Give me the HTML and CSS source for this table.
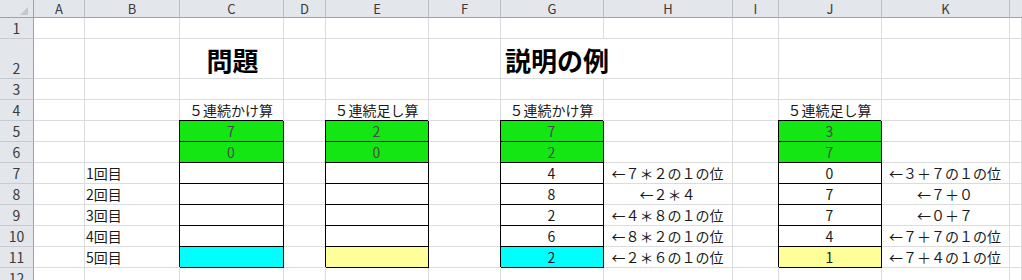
FILE: index.html
```html
<!DOCTYPE html>
<html lang="ja">
<head>
<meta charset="utf-8">
<title>Sheet</title>
<link rel="stylesheet" href="styles.css">
</head>
<body>
<div class="sheet">
  <!-- header row -->
  <div class="h corner"><span class="tri"></span></div>
  <div class="h">A</div><div class="h">B</div><div class="h">C</div><div class="h">D</div>
  <div class="h">E</div><div class="h">F</div><div class="h">G</div><div class="h">H</div>
  <div class="h">I</div><div class="h">J</div><div class="h">K</div><div class="h last"></div>

  <!-- row 1 -->
  <div class="rh">1</div>
  <div class="c"></div><div class="c"></div><div class="c"></div><div class="c"></div><div class="c"></div><div class="c"></div><div class="c"></div><div class="c"></div><div class="c"></div><div class="c"></div><div class="c"></div><div class="c"></div>

  <!-- row 2 -->
  <div class="rh">2</div>
  <div class="c"></div><div class="c"></div>
  <div class="c ctr title">問題</div>
  <div class="c"></div><div class="c"></div><div class="c"></div>
  <div class="c title nor">説明の例</div>
  <div class="c"></div><div class="c"></div><div class="c"></div><div class="c"></div><div class="c"></div>

  <!-- row 3 -->
  <div class="rh">3</div>
  <div class="c"></div><div class="c"></div><div class="c"></div><div class="c"></div><div class="c"></div><div class="c"></div><div class="c"></div><div class="c"></div><div class="c"></div><div class="c"></div><div class="c"></div><div class="c"></div>

  <!-- row 4 -->
  <div class="rh">4</div>
  <div class="c"></div><div class="c"></div>
  <div class="c ctr">５連続かけ算</div>
  <div class="c"></div>
  <div class="c ctr">５連続足し算</div>
  <div class="c"></div>
  <div class="c ctr">５連続かけ算</div>
  <div class="c"></div><div class="c"></div>
  <div class="c ctr">５連続足し算</div>
  <div class="c"></div><div class="c"></div>

  <!-- row 5 -->
  <div class="rh">5</div>
  <div class="c"></div><div class="c"></div>
  <div class="c ctr b g">7</div>
  <div class="c"></div>
  <div class="c ctr b g">2</div>
  <div class="c"></div>
  <div class="c ctr b g">7</div>
  <div class="c"></div><div class="c"></div>
  <div class="c ctr b g">3</div>
  <div class="c"></div><div class="c"></div>

  <!-- row 6 -->
  <div class="rh">6</div>
  <div class="c"></div><div class="c"></div>
  <div class="c ctr b g">0</div>
  <div class="c"></div>
  <div class="c ctr b g">0</div>
  <div class="c"></div>
  <div class="c ctr b g">2</div>
  <div class="c"></div><div class="c"></div>
  <div class="c ctr b g">7</div>
  <div class="c"></div><div class="c"></div>

  <!-- row 7 -->
  <div class="rh">7</div>
  <div class="c"></div>
  <div class="c">1回目</div>
  <div class="c ctr b w"></div>
  <div class="c"></div>
  <div class="c ctr b w"></div>
  <div class="c"></div>
  <div class="c ctr b w">4</div>
  <div class="c ctr">←７＊２の１の位</div>
  <div class="c"></div>
  <div class="c ctr b w">0</div>
  <div class="c ctr">←３＋７の１の位</div>
  <div class="c"></div>

  <!-- row 8 -->
  <div class="rh">8</div>
  <div class="c"></div>
  <div class="c">2回目</div>
  <div class="c ctr b w"></div>
  <div class="c"></div>
  <div class="c ctr b w"></div>
  <div class="c"></div>
  <div class="c ctr b w">8</div>
  <div class="c ctr">←２＊４</div>
  <div class="c"></div>
  <div class="c ctr b w">7</div>
  <div class="c ctr">←７＋０</div>
  <div class="c"></div>

  <!-- row 9 -->
  <div class="rh">9</div>
  <div class="c"></div>
  <div class="c">3回目</div>
  <div class="c ctr b w"></div>
  <div class="c"></div>
  <div class="c ctr b w"></div>
  <div class="c"></div>
  <div class="c ctr b w">2</div>
  <div class="c ctr">←４＊８の１の位</div>
  <div class="c"></div>
  <div class="c ctr b w">7</div>
  <div class="c ctr">←０＋７</div>
  <div class="c"></div>

  <!-- row 10 -->
  <div class="rh">10</div>
  <div class="c"></div>
  <div class="c">4回目</div>
  <div class="c ctr b w"></div>
  <div class="c"></div>
  <div class="c ctr b w"></div>
  <div class="c"></div>
  <div class="c ctr b w">6</div>
  <div class="c ctr">←８＊２の１の位</div>
  <div class="c"></div>
  <div class="c ctr b w">4</div>
  <div class="c ctr">←７＋７の１の位</div>
  <div class="c"></div>

  <!-- row 11 -->
  <div class="rh">11</div>
  <div class="c"></div>
  <div class="c">5回目</div>
  <div class="c ctr b cy"></div>
  <div class="c"></div>
  <div class="c ctr b yl"></div>
  <div class="c"></div>
  <div class="c ctr b cy">2</div>
  <div class="c ctr">←２＊６の１の位</div>
  <div class="c"></div>
  <div class="c ctr b yl">1</div>
  <div class="c ctr">←７＋４の１の位</div>
  <div class="c"></div>

  <!-- row 12 -->
  <div class="rh">12</div>
  <div class="c"></div><div class="c"></div><div class="c"></div><div class="c"></div><div class="c"></div><div class="c"></div><div class="c"></div><div class="c"></div><div class="c"></div><div class="c"></div><div class="c"></div><div class="c"></div>
</div>
</body>
</html>
```

FILE: styles.css
```css
html, body {
  margin: 0;
  padding: 0;
  background: #ffffff;
  overflow: hidden;
  width: 1022px;
  height: 280px;
}

.sheet {
  display: grid;
  grid-template-columns: 34px 51px 95px 104px 42px 103px 72px 103px 129px 46px 103px 128px 12px;
  grid-template-rows: 18px 21px 40px repeat(10, 21px);
  font-family: "Noto Sans CJK JP", "Noto Sans", sans-serif;
  font-size: 14px;
  color: #1a1a1a;
}

.sheet > div {
  box-sizing: border-box;
  display: flex;
  align-items: flex-end;
  white-space: nowrap;
  min-width: 0;
}

.h {
  background: #e3e6ea;
  border-right: 1px solid #b9bec5;
  border-bottom: 1px solid #9ba3ac;
  justify-content: center;
  align-items: center !important;
  font-size: 13px;
  line-height: 17px;
  color: #3a3a3a;
}

.h.last {
  border-right: none;
}

.corner {
  justify-content: flex-end !important;
  align-items: flex-end !important;
  padding: 0 5px 2px 0;
  border-right-color: #9ba3ac;
}

.tri {
  display: block;
  width: 0;
  height: 0;
  border-left: 8px solid transparent;
  border-bottom: 8px solid #c3c8ce;
}

.rh {
  background: #e3e6ea;
  border-right: 1px solid #9ba3ac;
  border-bottom: 1px solid #c7cbd1;
  justify-content: center;
  font-size: 14px;
  line-height: 18px;
  padding-bottom: 1px;
  color: #3a3a3a;
}

.c {
  border-right: 1px solid #dadcdd;
  border-bottom: 1px solid #dadcdd;
  padding: 0 2px 1px 1px;
  line-height: 18px;
  overflow: visible;
}

.ctr {
  justify-content: center;
}

.title {
  font-size: 26px;
  font-weight: bold;
  line-height: 30px;
  padding-bottom: 3px;
  padding-left: 4px;
  color: #000;
}

.nor {
  border-right-color: transparent;
}

.b {
  border-right: 1px solid #000;
  border-bottom: 1px solid #000;
  box-shadow: -1px -1px 0 0 #000;
}

.g {
  background: #14e614;
  color: #4a4a4a;
}

.w {
  background: #ffffff;
}

.cy {
  background: #00ffff;
}

.yl {
  background: #ffff99;
}
```
